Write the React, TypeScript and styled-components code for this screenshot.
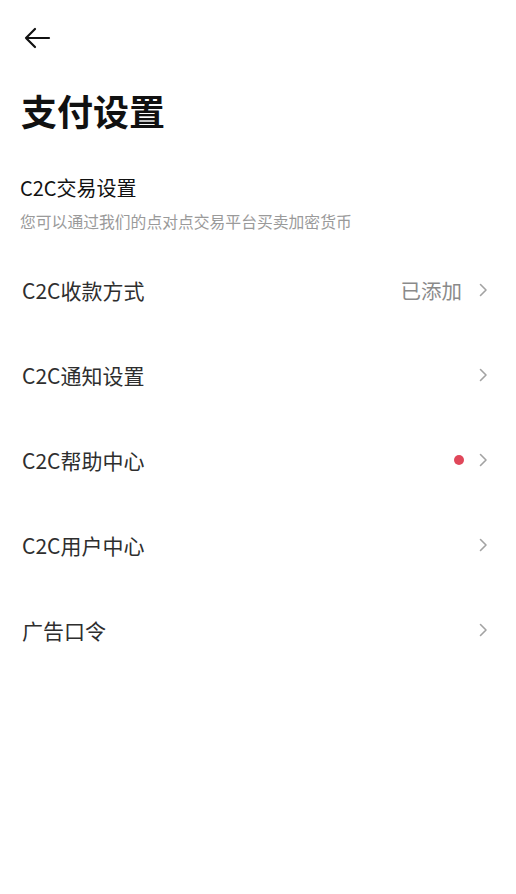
import React from 'react';
import styled, { createGlobalStyle } from 'styled-components';

const GlobalStyle = createGlobalStyle`
  html, body {
    margin: 0;
    padding: 0;
    background: #ffffff;
  }
  body {
    font-family: "Noto Sans CJK SC", "Noto Sans", sans-serif;
    -webkit-font-smoothing: antialiased;
  }
`;

const Page = styled.div`
  min-height: 100vh;
  padding: 0 28px 0 22px;
  box-sizing: border-box;
  background: #ffffff;
`;

const TopBar = styled.div`
  height: 76px;
  display: flex;
  align-items: center;
`;

const BackButton = styled.button`
  background: none;
  border: none;
  padding: 0;
  margin-left: 1px;
  display: flex;
  cursor: pointer;
  color: #111;
`;

const Title = styled.h1`
  margin: 12px 0 0 -1px;
  font-size: 36px;
  line-height: 44px;
  font-weight: 700;
  color: #111;
`;

const SectionTitle = styled.div`
  margin-top: 42px;
  margin-left: -2px;
  font-size: 20px;
  line-height: 28px;
  color: #111;
`;

const SectionDesc = styled.div`
  margin-top: 9px;
  margin-left: -2px;
  font-size: 15.8px;
  line-height: 22px;
  color: #9a9a9a;
`;

const List = styled.div`
  margin-top: 14px;
  display: flex;
  flex-direction: column;
`;

const Row = styled.div`
  height: 85px;
  display: flex;
  align-items: center;
  justify-content: space-between;
  cursor: pointer;
`;

const Label = styled.span`
  font-size: 21px;
  color: #2e2e2e;
`;

const Right = styled.div`
  display: flex;
  align-items: center;
  gap: 16px;
`;

const Value = styled.span`
  font-size: 20.5px;
  color: #8a8a8a;
`;

const Dot = styled.span`
  width: 10px;
  height: 10px;
  border-radius: 50%;
  background: #e0475a;
  margin-right: -2px;
`;

const Chevron = () => (
  <svg width="10" height="16" viewBox="0 0 10 16" fill="none">
    <path d="M2.5 2.5 L8 8 L2.5 13.5" stroke="#a3a3a3" strokeWidth="1.6" strokeLinecap="round" strokeLinejoin="round" />
  </svg>
);

const items: { label: string; value?: string; dot?: boolean }[] = [
  { label: 'C2C收款方式', value: '已添加' },
  { label: 'C2C通知设置' },
  { label: 'C2C帮助中心', dot: true },
  { label: 'C2C用户中心' },
  { label: '广告口令' },
];

const App: React.FC = () => (
  <>
    <GlobalStyle />
    <Page>
      <TopBar>
        <BackButton>
          <svg width="28" height="24" viewBox="0 0 28 24" fill="none">
            <path d="M26 12 H3 M12 3 L3 12 L12 21" stroke="#111" strokeWidth="2.2" strokeLinecap="round" strokeLinejoin="round" />
          </svg>
        </BackButton>
      </TopBar>
      <Title>支付设置</Title>
      <SectionTitle>C2C交易设置</SectionTitle>
      <SectionDesc>您可以通过我们的点对点交易平台买卖加密货币</SectionDesc>
      <List>
        {items.map((it) => (
          <Row key={it.label}>
            <Label>{it.label}</Label>
            <Right>
              {it.value && <Value>{it.value}</Value>}
              {it.dot && <Dot />}
              <Chevron />
            </Right>
          </Row>
        ))}
      </List>
    </Page>
  </>
);

export default App;
